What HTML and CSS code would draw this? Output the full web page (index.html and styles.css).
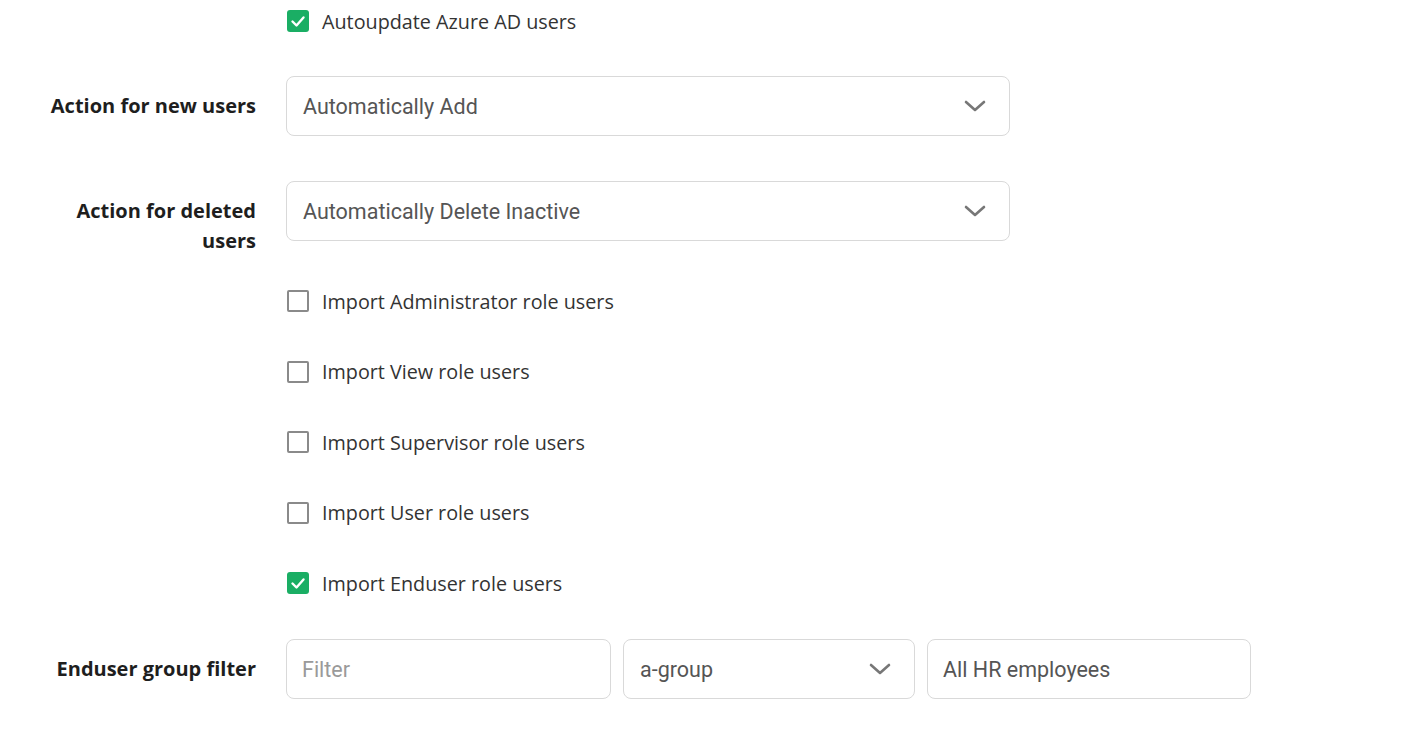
FILE: index.html
```html
<!DOCTYPE html>
<html>
<head>
<meta charset="utf-8">
<link rel="stylesheet" href="styles.css">
</head>
<body>
<div class="form">
  <div class="row row-check row-top">
    <div class="label"></div>
    <div class="check"><span class="box checked"><svg viewBox="0 0 22 22" width="22" height="22"><path d="M5.5 11.5 L9.5 15.5 L16.5 7.5" fill="none" stroke="#fff" stroke-width="2.4" stroke-linecap="round" stroke-linejoin="round"/></svg></span><span class="text">Autoupdate Azure AD users</span></div>
  </div>
  <div class="row row-select">
    <div class="label">Action for new users</div>
    <div class="select wide"><span class="value">Automatically Add</span><svg class="chev" viewBox="0 0 22 12" width="22" height="12"><path d="M2 2 L11 10 L20 2" fill="none" stroke="#777" stroke-width="2.6" stroke-linecap="round" stroke-linejoin="round"/></svg></div>
  </div>
  <div class="row row-select row-tall">
    <div class="label">Action for deleted users</div>
    <div class="select wide"><span class="value">Automatically Delete Inactive</span><svg class="chev" viewBox="0 0 22 12" width="22" height="12"><path d="M2 2 L11 10 L20 2" fill="none" stroke="#777" stroke-width="2.6" stroke-linecap="round" stroke-linejoin="round"/></svg></div>
  </div>
  <div class="row row-check">
    <div class="label"></div>
    <div class="check"><span class="box"></span><span class="text">Import Administrator role users</span></div>
  </div>
  <div class="row row-check">
    <div class="label"></div>
    <div class="check"><span class="box"></span><span class="text">Import View role users</span></div>
  </div>
  <div class="row row-check">
    <div class="label"></div>
    <div class="check"><span class="box"></span><span class="text">Import Supervisor role users</span></div>
  </div>
  <div class="row row-check">
    <div class="label"></div>
    <div class="check"><span class="box"></span><span class="text">Import User role users</span></div>
  </div>
  <div class="row row-check row-last-check">
    <div class="label"></div>
    <div class="check"><span class="box checked"><svg viewBox="0 0 22 22" width="22" height="22"><path d="M5.5 11.5 L9.5 15.5 L16.5 7.5" fill="none" stroke="#fff" stroke-width="2.4" stroke-linecap="round" stroke-linejoin="round"/></svg></span><span class="text">Import Enduser role users</span></div>
  </div>
  <div class="row row-select">
    <div class="label">Enduser group filter</div>
    <div class="group">
      <div class="input filter"><span class="placeholder">Filter</span></div>
      <div class="select group-select"><span class="value">a-group</span><svg class="chev" viewBox="0 0 22 12" width="22" height="12"><path d="M2 2 L11 10 L20 2" fill="none" stroke="#777" stroke-width="2.6" stroke-linecap="round" stroke-linejoin="round"/></svg></div>
      <div class="input name"><span class="value">All HR employees</span></div>
    </div>
  </div>
</div>
</body>
</html>
```

FILE: styles.css
```css
html, body {
  margin: 0;
  padding: 0;
  background: #fff;
}
body {
  font-family: "Open Sans", "Lato", sans-serif;
  color: #222;
}
.form {
  padding: 6px 0 0 8px;
  display: flex;
  flex-direction: column;
}
.row {
  display: grid;
  grid-template-columns: 248px auto;
  column-gap: 30px;
  align-items: start;
}
.label {
  text-align: right;
  font-weight: 700;
  font-size: 20px;
  line-height: 30px;
  color: #1e1e1e;
}
.row-select .label {
  padding-top: 15px;
}
.row-tall .label {
  padding-left: 40px;
}
.row-check {
  height: 30px;
  margin-bottom: 40.5px;
}
.row-top {
  margin-bottom: 40px;
}
.row-last-check {
  margin-bottom: 41px;
}
.row-select {
  margin-bottom: 45px;
}
.row-tall {
  margin-bottom: 30px;
}
.check {
  display: flex;
  align-items: center;
  height: 30px;
  padding-left: 1px;
}
.box {
  width: 22px;
  height: 22px;
  box-sizing: border-box;
  border: 2px solid #8a8a8a;
  border-radius: 2px;
  display: inline-flex;
  flex: none;
}
.box.checked {
  border: none;
  background: #1aae64;
  border-radius: 3px;
}
.box svg {
  display: block;
}
.check .text {
  margin-left: 13px;
  font-size: 19.75px;
  color: #333;
}
.select, .input {
  box-sizing: border-box;
  height: 60px;
  border: 1px solid #d9d9d9;
  border-radius: 8px;
  display: flex;
  align-items: center;
  padding: 0 23px 0 16px;
  font-family: "Roboto", "Liberation Sans", sans-serif;
  font-size: 21.5px;
  color: #555;
  background: #fff;
}
.select .value {
  flex: 1;
}
.wide {
  width: 724px;
}
.chev {
  display: block;
  flex: none;
}
.group {
  display: flex;
  gap: 12px;
}
.filter {
  width: 325px;
  padding-left: 15px;
}
.group-select {
  width: 292px;
}
.name {
  width: 324px;
  padding-left: 15px;
}
.placeholder {
  color: #9a9a9a;
}
```
